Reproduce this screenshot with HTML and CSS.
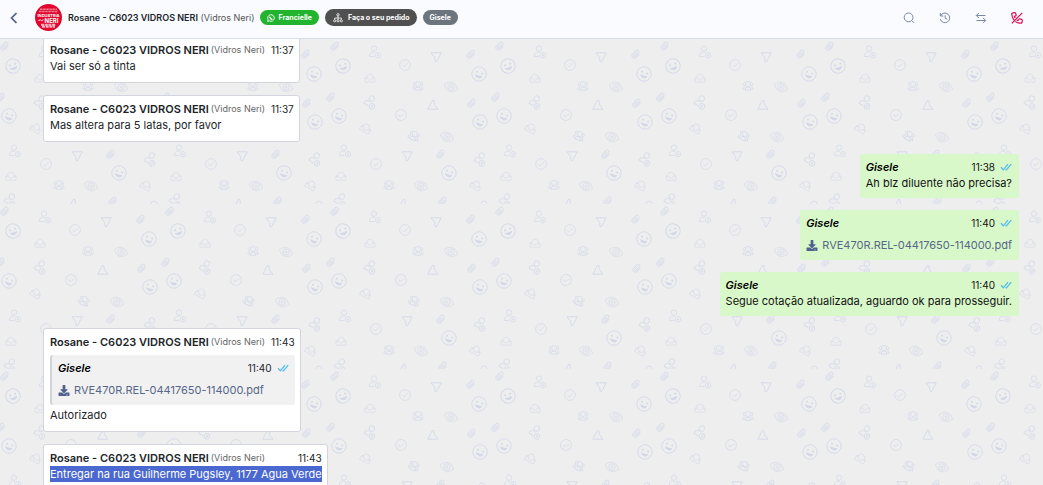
FILE: index.html
```
<!DOCTYPE html>
<html lang="pt-BR">

<head>
	<meta charset="UTF-8">
	<title>Atendimento</title>
	<link rel="stylesheet" href="styles.css">
</head>

<body>
	<svg class="sprite" aria-hidden="true">
		<defs>
			<symbol id="checks" viewBox="0 0 12 8">
				<path d="M1 4.2l2.3 2.6L8 1.2M5.6 6.2l.8.7L11.2 1.2" fill="none" stroke="#53bdeb" stroke-width="1.3" />
			</symbol>
			<symbol id="download" viewBox="0 0 512 512">
				<path fill="currentColor" d="M216 0h80c13.300 0 24 10.700 24 24v168h87.700c17.800 0 26.700 21.500 14.100 34.100L269.700 378.300c-7.500 7.500-19.800 7.500-27.300 0L90.100 226.100c-12.600-12.600-3.700-34.100 14.100-34.100H192V24c0-13.300 10.700-24 24-24zm296 376v112c0 13.300-10.700 24-24 24H24c-13.300 0-24-10.700-24-24V376c0-13.300 10.700-24 24-24h146.700l49 49c20.100 20.100 52.500 20.100 72.600 0l49-49H488c13.300 0 24 10.700 24 24zm-124 88c0-11-9-20-20-20s-20 9-20 20 9 20 20 20 20-9 20-20zm64 0c0-11-9-20-20-20s-20 9-20 20 9 20 20 20 20-9 20-20z" />
			</symbol>

			<!-- wallpaper shapes, centred on 0,0 -->
			<g id="w-clip">
				<path transform="rotate(45)" d="M2.400-2.500v5a2.400 2.400 0 0 1-4.800 0v-5a1.700 1.700 0 0 1 3.400 0v4.700a.8.8 0 0 1-1.700 0v-4" />
			</g>
			<g id="w-smile">
				<circle r="7.200" class="bold" />
				<circle class="fill" cx="-2" cy="-2.200" r="1" />
				<circle class="fill" cx="3.200" cy="-.6" r="1" />
				<path class="fill" d="M-4.400 0Q-1 2 3.400 2.200Q2 4.800-.6 4.300Q-3.200 3.500-4.400 0z" />
			</g>
			<g id="w-user">
				<circle cx="-1" cy="-3.400" r="2.700" />
				<path d="M-.5 4.600H-5.500C-6 1.500-4 .2-2.500.2H0" />
				<circle cx="3" cy="3.300" r="2.700" />
				<path d="M1.800 3.300h2.400M3 2.100v2.400" />
			</g>
			<g id="w-check">
				<circle r="5.400" />
				<path d="M-2.600.1L-.8 1.900 2.800-1.700" />
			</g>
			<g id="w-tri">
				<path class="bold" d="M-5-4.200H5.200L.5 4.800-1 4.500-1.300.5z" />
			</g>
			<g id="w-box">
				<path class="thin" d="M-5 0v4.200H5V0L3-1.500M-5 0l2-1.500M-5 .5h2.500l1.200 1.500h2.600L2.500.5H5M-3 0v-2.500Q0-5.500 3-2.500V0" />
			</g>
			<g id="w-group">
				<circle cy="-2" r="2.500" />
				<path d="M-3 4.200Q-3.200 1 0 1T3 4.200zM-3-.6a1.500 1.500 0 1 1 .5-2.800M3-.6a1.500 1.500 0 1 0-.5-2.800M-3 3.200h-2.200q0-2.500 2.200-2.600M3 3.200h2.200q0-2.500-2.200-2.600" />
			</g>
			<g id="w-eye">
				<path class="thin" transform="rotate(20)" d="M-7 0Q-4-4.500 0-4.500T7 0Q4 4.500 0 4.500T-7 0z" />
				<circle r="3.200" />
				<circle r="1" />
			</g>

			<pattern id="wallpaper" width="165" height="165" patternUnits="userSpaceOnUse">
				<g class="doodles">
					<use href="#w-clip" x="5" y="7" />
					<use href="#w-clip" x="141" y="15" />
					<use href="#w-clip" x="1" y="58" />
					<use href="#w-clip" x="166" y="58" />
					<use href="#w-clip" x="142" y="64" />
					<use href="#w-clip" x="111" y="115" />
					<use href="#w-clip" x="113" y="162" />
					<use href="#w-smile" transform="translate(13 27) rotate(-35)" />
					<use href="#w-smile" x="149" y="35" />
					<use href="#w-smile" x="9" y="77" />
					<use href="#w-smile" x="150" y="83" />
					<use href="#w-smile" x="119" y="134" />
					<use href="#w-user" x="45" y="13" />
					<use href="#w-user" transform="translate(41 63) rotate(30)" />
					<use href="#w-user" x="15" y="112" />
					<use href="#w-user" transform="translate(151 120) rotate(30)" />
					<use href="#w-user" transform="translate(11 161) rotate(30)" />
					<use href="#w-check" x="75" y="26" />
					<use href="#w-check" transform="translate(71 76) rotate(15)" />
					<use href="#w-check" x="46" y="125" />
					<use href="#w-tri" x="106" y="18" />
					<use href="#w-tri" transform="translate(103 66) rotate(180)" />
					<use href="#w-tri" x="77" y="117" />
					<use href="#w-tri" transform="translate(74 165) rotate(180)" />
					<use href="#w-box" x="40" y="39" />
					<use href="#w-box" transform="translate(36 89) rotate(30)" />
					<use href="#w-box" x="11" y="137" />
					<use href="#w-box" transform="translate(146 146) rotate(30)" />
					<use href="#w-group" x="88" y="47" />
					<use href="#w-group" transform="translate(84 97) rotate(25)" />
					<use href="#w-group" x="59" y="146" />
					<use href="#w-eye" x="121" y="48" />
					<use href="#w-eye" x="117" y="98" />
					<use href="#w-eye" x="91" y="147" />
					<circle cx="154" cy="165" r="3" />
				</g>
			</pattern>
		</defs>
	</svg>

	<header class="topbar">
		<button class="icon-btn back" type="button" aria-label="Voltar">
			<svg width="8" height="12" viewBox="0 0 8 12"><path d="M6.500 1.200L1.500 6l5 4.800" fill="none" stroke="#4c5f8d" stroke-width="1.600" /></svg>
		</button>
		<svg class="avatar" viewBox="0 0 27 27" role="img" aria-label="Industria do Neri">
			<circle cx="13.500" cy="13.500" r="13.500" fill="#e2062c" />
			<path d="M5 5.300h17M4 7.500h19" stroke="#f07f92" stroke-width="1.600" stroke-dasharray="2.500 .6" />
			<text x="13.500" y="13" class="avatar-small">INDUSTRIA</text>
			<text x="16.500" y="19" class="avatar-big">NERI</text>
			<path d="M3.500 16.500l2-.7 1 .8 2-.8" fill="none" stroke="#fff" />
			<path d="M6 20.800h15M7 22.800h13" stroke="#f8b5c0" stroke-width="2" stroke-dasharray="3 .7" />
		</svg>
		<div class="contact">
			<strong>Rosane - C6023 VIDROS NERI</strong>
			<span>(Vidros Neri)</span>
		</div>
		<div class="tags">
			<span class="tag green">
				<svg width="8" height="8" viewBox="0 0 8 8" fill="none" stroke="#fff"><path d="M.6 7.400l.5-1.800a3.300 3.300 0 1 1 1.300 1.300z" stroke-width=".9" /><path d="M2.800 2.600q.2 2.300 2.600 2.700" stroke-width="1.300" /></svg>
				Francielle
			</span>
			<span class="tag dark">
				<svg width="10" height="10" viewBox="0 0 10 10" fill="none" stroke="#fff" stroke-width=".8"><circle cx="5" cy="1.800" r="1.200" /><path d="M5 3v4M1.700 6.500V5h6.600v1.500" /><circle cx="1.700" cy="7.800" r="1.100" /><circle cx="5" cy="7.800" r="1.100" /><circle cx="8.300" cy="7.800" r="1.100" /></svg>
				Faça o seu pedido
			</span>
			<span class="tag gray">Gisele</span>
		</div>
		<nav class="actions">
			<button class="icon-btn" type="button" aria-label="Buscar">
				<svg width="12" height="12" viewBox="0 0 12 12" fill="none" stroke="currentColor"><circle cx="5.600" cy="5.400" r="4.400" /><path d="M8.800 8.600l2.200 2.200" /></svg>
			</button>
			<button class="icon-btn" type="button" aria-label="Histórico">
				<svg width="12" height="12" viewBox="0 0 12 12" fill="none" stroke="currentColor"><path d="M1.300 1v3h3M1.500 4a4.800 4.800 0 1 1-.2 3.200M6.200 3.300v3l2 1" /></svg>
			</button>
			<button class="icon-btn" type="button" aria-label="Transferir">
				<svg width="12" height="12" viewBox="0 0 12 12" fill="none" stroke="currentColor"><path d="M10.500 3.500H1.500M3.800 1L1.300 3.500 3.800 6M1.500 8.500h9M8.200 6l2.500 2.500L8.200 11" /></svg>
			</button>
			<button class="icon-btn hangup" type="button" aria-label="Encerrar">
				<svg width="12" height="12" viewBox="0 0 12 12" fill="none" stroke="currentColor" stroke-width="1.200"><path d="M3 8.200Q.6 5 .8 1.400q1.800-1.100 3.600-.6.900 1.500.6 2.800L3.400 4.500q.3 1 .9 1.700M5.800 8.100l1.200.5 1.200-1.600q1.700-.2 3 .9.300 1.900-.6 3.200Q7 11.500 4.300 9.600M11.300.8L.8 11.300" /></svg>
			</button>
		</nav>
	</header>

	<main class="chat">
		<svg class="wallpaper" aria-hidden="true"><rect width="100%" height="100%" fill="url(#wallpaper)" /></svg>

		<article class="msg in">
			<div class="msg-head"><strong>Rosane - C6023 VIDROS NERI</strong><small>(Vidros Neri)</small><time>11:37</time></div>
			<p>Vai ser só a tinta</p>
		</article>

		<article class="msg in">
			<div class="msg-head"><strong>Rosane - C6023 VIDROS NERI</strong><small>(Vidros Neri)</small><time>11:37</time></div>
			<p>Mas altera para 5 latas, por favor</p>
		</article>

		<article class="msg out">
			<div class="msg-head"><strong>Gisele</strong><time>11:38</time><svg class="checks"><use href="#checks" /></svg></div>
			<p>Ah blz diluente não precisa?</p>
		</article>

		<article class="msg out">
			<div class="msg-head"><strong>Gisele</strong><time>11:40</time><svg class="checks"><use href="#checks" /></svg></div>
			<a class="file" href="#"><svg class="download"><use href="#download" /></svg>RVE470R.REL-04417650-114000.pdf</a>
		</article>

		<article class="msg out">
			<div class="msg-head"><strong>Gisele</strong><time>11:40</time><svg class="checks"><use href="#checks" /></svg></div>
			<p>Segue cotação atualizada, aguardo ok para prosseguir.</p>
		</article>

		<article class="msg in">
			<div class="msg-head"><strong>Rosane - C6023 VIDROS NERI</strong><small>(Vidros Neri)</small><time>11:43</time></div>
			<blockquote class="quote">
				<div class="msg-head"><strong>Gisele</strong><time>11:40</time><svg class="checks"><use href="#checks" /></svg></div>
				<a class="file" href="#"><svg class="download"><use href="#download" /></svg>RVE470R.REL-04417650-114000.pdf</a>
			</blockquote>
			<p>Autorizado</p>
		</article>

		<article class="msg in">
			<div class="msg-head"><strong>Rosane - C6023 VIDROS NERI</strong><small>(Vidros Neri)</small><time>11:43</time></div>
			<p><mark>Entregar na rua Guilherme Pugsley, 1177 Agua Verde</mark></p>
		</article>
	</main>
</body>

</html>
```
FILE: styles.css
```
* {
	box-sizing: border-box;
	margin: 0;
	padding: 0;
}

body {
	display: flex;
	flex-direction: column;
	height: 100vh;
	overflow: hidden;
	background: #eee;
	color: #212529;
	font-family: Inter, "Liberation Sans", sans-serif;
	font-size: 11px;
	line-height: 16px;
}

.sprite {
	position: absolute;
	width: 0;
	height: 0;
}

/* top bar */
.topbar {
	display: flex;
	flex-shrink: 0;
	align-items: center;
	position: relative;
	z-index: 1;
	height: 39px;
	padding: 0 20px 3px 10px;
	background: #fafbff;
	border-bottom: 1px solid #d8e0ea;
}

.icon-btn {
	display: flex;
	border: 0;
	background: none;
	color: #7b88a3;
	cursor: pointer;
}

.avatar {
	width: 27px;
	height: 27px;
	margin: 0 6px 0 17px;
}

.avatar text {
	fill: #fff;
	font-weight: 700;
	text-anchor: middle;
}

.avatar-small {
	font-size: 4px;
}

.avatar-big {
	font-size: 6px;
}

.contact {
	font-size: 9px;
	white-space: nowrap;
}

.contact strong {
	font-weight: 600;
}

.contact span {
	color: #555;
}

.tags {
	display: flex;
	align-items: center;
	gap: 6px;
	margin-left: 5px;
	white-space: nowrap;
}

.tag {
	display: flex;
	align-items: center;
	gap: 4px;
	height: 15px;
	padding: 0 7px;
	border-radius: 8px;
	color: #fff;
	font-size: 7px;
	font-weight: 700;
}

.green {
	background: #22b42e;
}

.dark {
	height: 17px;
	padding: 0 7px 0 8px;
	gap: 5px;
	border-radius: 9px;
	background: #505050;
}

.gray {
	background: #6c757d;
}

.actions {
	display: flex;
	align-items: center;
	gap: 24px;
	margin-left: auto;
}

.hangup {
	color: #dc0f50;
}

/* conversation, scrolled slightly under the bar */
.chat {
	display: flex;
	flex: 1;
	flex-direction: column;
	gap: 12px;
	position: relative;
	margin-top: -3px;
	padding: 0 24px 0 43px;
}

.wallpaper {
	position: absolute;
	top: 3px;
	left: 0;
	width: 100%;
	height: 100%;
}

.doodles {
	fill: none;
	stroke: #dadeea;
	stroke-width: 1;
}

.fill {
	fill: #d3d8e8;
	stroke: none;
}

.bold {
	stroke: #d5daea;
}

.thin {
	stroke: #dfe1ea;
}

.msg {
	position: relative;
	flex-shrink: 0;
	border-radius: 3px;
}

.in {
	align-self: flex-start;
	padding: 5px 5px 8px 6px;
	border: 1px solid #d3d5de;
	background: #fff;
}

.out {
	align-self: flex-end;
	padding: 5px 7px 7px 6px;
	background: #d9f8c9;
	color: #111;
}

.msg-head {
	display: flex;
	align-items: center;
	white-space: nowrap;
}

.msg-head strong {
	font-weight: 600;
}

.out strong,
.quote strong {
	color: #000;
	font-style: italic;
}

.msg-head small {
	margin-left: 2px;
	color: #666;
	font-size: 9px;
}

.msg-head time {
	margin-left: auto;
	padding-left: 6px;
	font-size: 10px;
}

.checks {
	width: 12px;
	height: 8px;
	margin-left: 5px;
}

.file {
	display: flex;
	align-items: center;
	gap: 4px;
	margin-top: 6px;
	color: #566787;
	text-decoration: none;
}

.download {
	width: 12px;
	height: 11px;
	color: #50618f;
}

.quote {
	margin: 5px 0 2px;
	padding: 5px 6px 7px;
	border-left: 2px solid #d0d3d8;
	border-radius: 3px;
	background: #f1f1f1;
}

mark {
	display: block;
	background: #4a68d0;
	color: #fff;
}
```
